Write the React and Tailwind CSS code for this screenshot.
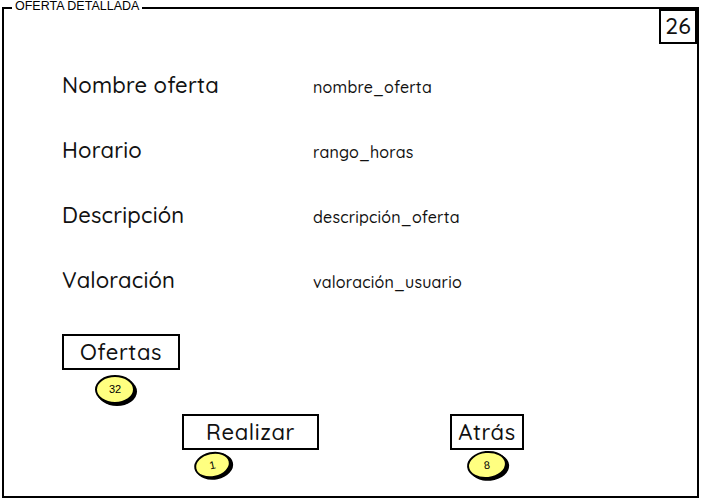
import React from "react";

const sans = { fontFamily: '"Quicksand", "Lato", "Noto Sans", sans-serif' };

function Badge({ n, className }) {
  return (
    <div
      className={
        "absolute flex items-center justify-center rounded-[50%] border-2 border-black bg-[#ffff80] shadow-[2px_2px_0_#000] text-[11px] text-black " +
        className
      }
      style={{ fontFamily: '"Liberation Sans", Arial, sans-serif' }}
    >
      {n}
    </div>
  );
}

function Row({ label, value }) {
  return (
    <div className="flex h-[65px] items-center">
      <div className="w-[251px] text-[22px] font-medium tracking-[0.2px] text-[#111]" style={sans}>
        {label}
      </div>
      <div className="pt-[3px] text-[16px] font-medium tracking-[0.2px] text-[#111]" style={sans}>
        {value}
      </div>
    </div>
  );
}

const btn =
  "flex h-[36px] items-center justify-center border-2 border-black bg-white text-[22px] font-medium tracking-[0.6px] text-[#111]";

export default function App() {
  return (
    <div className="relative h-[500px] w-[701px] overflow-hidden bg-white">
      <div className="relative ml-[2px] mt-[7px] h-[491px] w-[697px] border-2 border-black">
        <div
          className="absolute left-[8px] top-[-10px] bg-white px-[3px] text-[12.5px] leading-[15px] text-black"
          style={{ fontFamily: '"Liberation Sans", Arial, sans-serif' }}
        >
          OFERTA DETALLADA
        </div>
        <div
          className="absolute right-0 top-0 flex h-[35px] w-[38px] items-center justify-center border-2 border-black bg-white text-[23px] font-medium text-[#111]"
          style={sans}
        >
          26
        </div>

        <div className="pl-[58px] pt-[44px]">
          <Row label="Nombre oferta" value="nombre_oferta" />
          <Row label="Horario" value="rango_horas" />
          <Row label="Descripción" value="descripción_oferta" />
          <Row label="Valoración" value="valoración_usuario" />

          <div className="relative mt-[21px] h-[36px] w-[118px]">
            <div className={btn + " w-[118px]"} style={sans}>
              Ofertas
            </div>
            <Badge n="32" className="left-[33px] top-[41px] h-[29px] w-[40px]" />
          </div>

          <div className="mt-[44px] flex">
            <div className="relative ml-[120px]">
              <div className={btn + " w-[137px]"} style={sans}>
                Realizar
              </div>
              <Badge n="1" className="left-[12px] top-[38px] h-[26px] w-[37px] -rotate-12" />
            </div>
            <div className="relative ml-[131px]">
              <div className={btn + " w-[74px]"} style={sans}>
                Atrás
              </div>
              <Badge n="8" className="left-[17px] top-[37px] h-[28px] w-[40px] -rotate-6" />
            </div>
          </div>
        </div>
      </div>
    </div>
  );
}
